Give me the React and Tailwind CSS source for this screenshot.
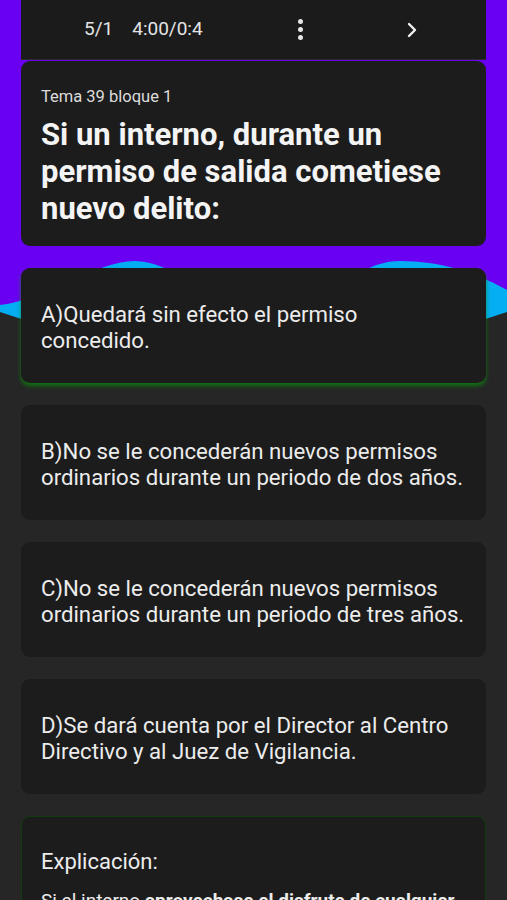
import React from "react";

const options = [
  { id: "A", text: "A)Quedará sin efecto el permiso\nconcedido.", correct: true },
  { id: "B", text: "B)No se le concederán nuevos permisos ordinarios durante un periodo de dos años." },
  { id: "C", text: "C)No se le concederán nuevos permisos ordinarios durante un periodo de tres años." },
  { id: "D", text: "D)Se dará cuenta por el Director al Centro Directivo y al Juez de Vigilancia." },
];

function Backdrop() {
  // purple header with the cyan wave underneath
  return (
    <svg className="absolute left-0 top-0" width="507" height="360" viewBox="0 0 507 360">
      <path d="M0 0 H507 V312 Q253 400 0 312 Z" fill="#05aef3" />
      <path
        d="M0 0 H507 V290 C475 272 440 261 400 261 C355 261 330 305 268 305 C205 305 175 261 135 261 C95 261 45 300 0 305 Z"
        fill="#6a00f2"
      />
    </svg>
  );
}

function TopBar() {
  return (
    <div className="flex items-center h-[60px] bg-[#1b1b1b] border-b border-[#2c2c2c] text-[19px] text-[#e4e4e4]">
      <span className="ml-[63px]">5/1</span>
      <span className="ml-[19px]">4:00/0:4</span>
      <span className="ml-[95px] flex flex-col items-center gap-[3px]">
        <span className="w-[5px] h-[5px] rounded-full bg-[#e6e6e6]" />
        <span className="w-[5px] h-[5px] rounded-full bg-[#e6e6e6]" />
        <span className="w-[5px] h-[5px] rounded-full bg-[#e6e6e6]" />
      </span>
      <svg className="ml-[103px]" width="12" height="16" viewBox="0 0 12 16">
        <path d="M3 2 L9 8 L3 14" fill="none" stroke="#f2f2f2" strokeWidth="2.4" strokeLinecap="round" strokeLinejoin="round" />
      </svg>
    </div>
  );
}

export default function App() {
  return (
    <div
      className="relative w-[507px] h-[900px] overflow-hidden bg-[#262626]"
      style={{ fontFamily: "Roboto, 'Noto Sans', sans-serif" }}
    >
      <Backdrop />
      <div className="relative flex flex-col px-[21px]">
        <TopBar />
        <div className="mt-px rounded-[9px] bg-[#1c1c1c] pt-[26px] pb-[19px] px-[20px]">
          <p className="text-[16.5px] leading-[20px] text-[#dcdcdc]">Tema 39 bloque 1</p>
          <h1 className="mt-[9px] text-[31px] leading-[37px] font-bold text-[#f4f4f4]">
            Si un interno, durante un permiso de salida cometiese nuevo delito:
          </h1>
        </div>
        <div className="flex flex-col gap-[22px] mt-[22px]">
          {options.map((o) => (
            <div
              key={o.id}
              className={`rounded-[9px] bg-[#1c1c1c] pl-[20px] pr-[10px] pt-[33px] pb-[30px] ${
                o.correct ? "shadow-[0_3px_4px_rgba(10,140,10,0.75)]" : ""
              }`}
            >
              <p className="whitespace-pre-line text-[22.2px] leading-[26px] text-[#ececec]">{o.text}</p>
            </div>
          ))}
          <div className="rounded-[9px] bg-[#1c1c1c] border border-[#0f3d0f] px-[19px] pt-[31px] pb-[30px]">
            <p className="text-[22px] leading-[28px] text-[#ececec]">Explicación:</p>
            <p className="mt-[12px] text-[19px] leading-[26px] text-[#ececec]">
              Si el interno <span className="font-bold">aprovechase el disfrute de cualquier</span> permiso de salida para cometer nuevo delito, quedará sin efecto el permiso concedido.
            </p>
          </div>
        </div>
      </div>
    </div>
  );
}
